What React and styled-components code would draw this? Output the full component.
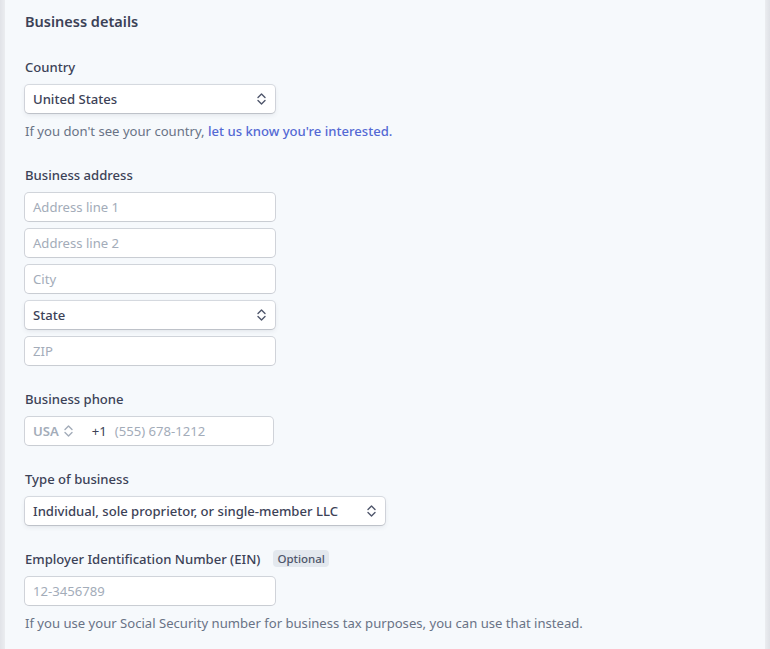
import React from "react";
import styled, { createGlobalStyle } from "styled-components";

const Global = createGlobalStyle`
  html, body { margin: 0; padding: 0; background: #e3e5ea; }
  body { font-family: "Noto Sans", "Open Sans", sans-serif; color: #3c4257; }
  * { box-sizing: border-box; }
`;

const Frame = styled.div`
  width: 770px;
  height: 649px;
  padding: 0 5px;
  background: linear-gradient(to right, #e1e3e8, #ebedf0 5px, #ebedf0 765px, #dfe1e6);
  overflow: hidden;
`;

const Panel = styled.main`
  height: 100%;
  background: #f6f9fc;
  padding: 11px 20px 0;
  display: flex;
  flex-direction: column;
`;

const Title = styled.h1`
  margin: 0 0 26px;
  font-size: 14.5px;
  font-weight: 600;
  line-height: 20px;
  color: #3c4257;
`;

const Section = styled.section`
  display: flex;
  flex-direction: column;
  margin-bottom: ${(p) => p.$mb ?? 24}px;
`;

const Label = styled.label`
  display: flex;
  align-items: center;
  gap: 13px;
  font-size: 13.1px;
  font-weight: 500;
  line-height: 20px;
  margin-bottom: 8px;
  color: #3c4257;
`;

const Badge = styled.span`
  font-size: 11.5px;
  font-weight: 500;
  line-height: 17px;
  padding: 0 4px;
  margin-top: -1px;
  border-radius: 4px;
  background: #e3e8ee;
  color: #4f566b;
`;

const Stack = styled.div`
  display: flex;
  flex-direction: column;
  gap: 8px;
`;

const SelectBox = styled.div`
  width: ${(p) => p.$w}px;
  height: 28px;
  display: flex;
  align-items: center;
  justify-content: space-between;
  padding: 0 9px 0 8px;
  background: #fff;
  border-radius: 4px;
  box-shadow: 0 0 0 1px rgba(60, 66, 87, 0.16), 0 2px 5px rgba(60, 66, 87, 0.1),
    0 1px 1px rgba(0, 0, 0, 0.08);
  font-size: 13.1px;
  font-weight: 500;
  color: #3c4257;
`;

const Input = styled.div`
  width: ${(p) => p.$w ?? 250}px;
  height: 28px;
  display: flex;
  align-items: center;
  padding: 0 8px;
  background: #fff;
  border-radius: 4px;
  box-shadow: 0 0 0 1px rgba(60, 66, 87, 0.2), 0 1px 1px rgba(0, 0, 0, 0.04);
  font-size: 13.1px;
  color: #a3acb9;
  gap: 6px;
`;

const PhoneCode = styled.span`
  display: flex;
  align-items: center;
  gap: 5px;
  font-weight: 600;
  color: #a3acb9;
  margin-right: 13px;
`;

const Prefix = styled.span`
  color: #3c4257;
  margin-right: 2px;
`;

const Help = styled.p`
  margin: 8px 0 0;
  font-size: 13.1px;
  line-height: 20px;
  color: #697386;
`;

const Link = styled.a`
  color: #5469d4;
  font-weight: 500;
  text-decoration: none;
`;

const Chevrons = ({ color = "#4f566b" }) => (
  <svg width="9" height="12" viewBox="0 0 9 12" fill="none">
    <path d="M1 4.5 L4.5 1 L8 4.5" stroke={color} strokeWidth="1.4" strokeLinecap="round" strokeLinejoin="round" />
    <path d="M1 7.5 L4.5 11 L8 7.5" stroke={color} strokeWidth="1.4" strokeLinecap="round" strokeLinejoin="round" />
  </svg>
);

export default function App() {
  return (
    <>
      <Global />
      <Frame>
        <Panel>
          <Title>Business details</Title>

          <Section>
            <Label>Country</Label>
            <SelectBox $w={250}>
              United States
              <Chevrons />
            </SelectBox>
            <Help>
              If you don't see your country, <Link>let us know you're interested.</Link>
            </Help>
          </Section>

          <Section>
            <Label>Business address</Label>
            <Stack>
              <Input>Address line 1</Input>
              <Input>Address line 2</Input>
              <Input>City</Input>
              <SelectBox $w={250}>
                State
                <Chevrons />
              </SelectBox>
              <Input>ZIP</Input>
            </Stack>
          </Section>

          <Section>
            <Label>Business phone</Label>
            <Input $w={248}>
              <PhoneCode>
                USA <Chevrons color="#a3acb9" />
              </PhoneCode>
              <Prefix>+1</Prefix>
              (555) 678-1212
            </Input>
          </Section>

          <Section>
            <Label>Type of business</Label>
            <SelectBox $w={360}>
              Individual, sole proprietor, or single-member LLC
              <Chevrons />
            </SelectBox>
          </Section>

          <Section $mb={0}>
            <Label>
              Employer Identification Number (EIN)
              <Badge>Optional</Badge>
            </Label>
            <Input>12-3456789</Input>
            <Help>
              If you use your Social Security number for business tax purposes, you can use that instead.
            </Help>
          </Section>
        </Panel>
      </Frame>
    </>
  );
}
